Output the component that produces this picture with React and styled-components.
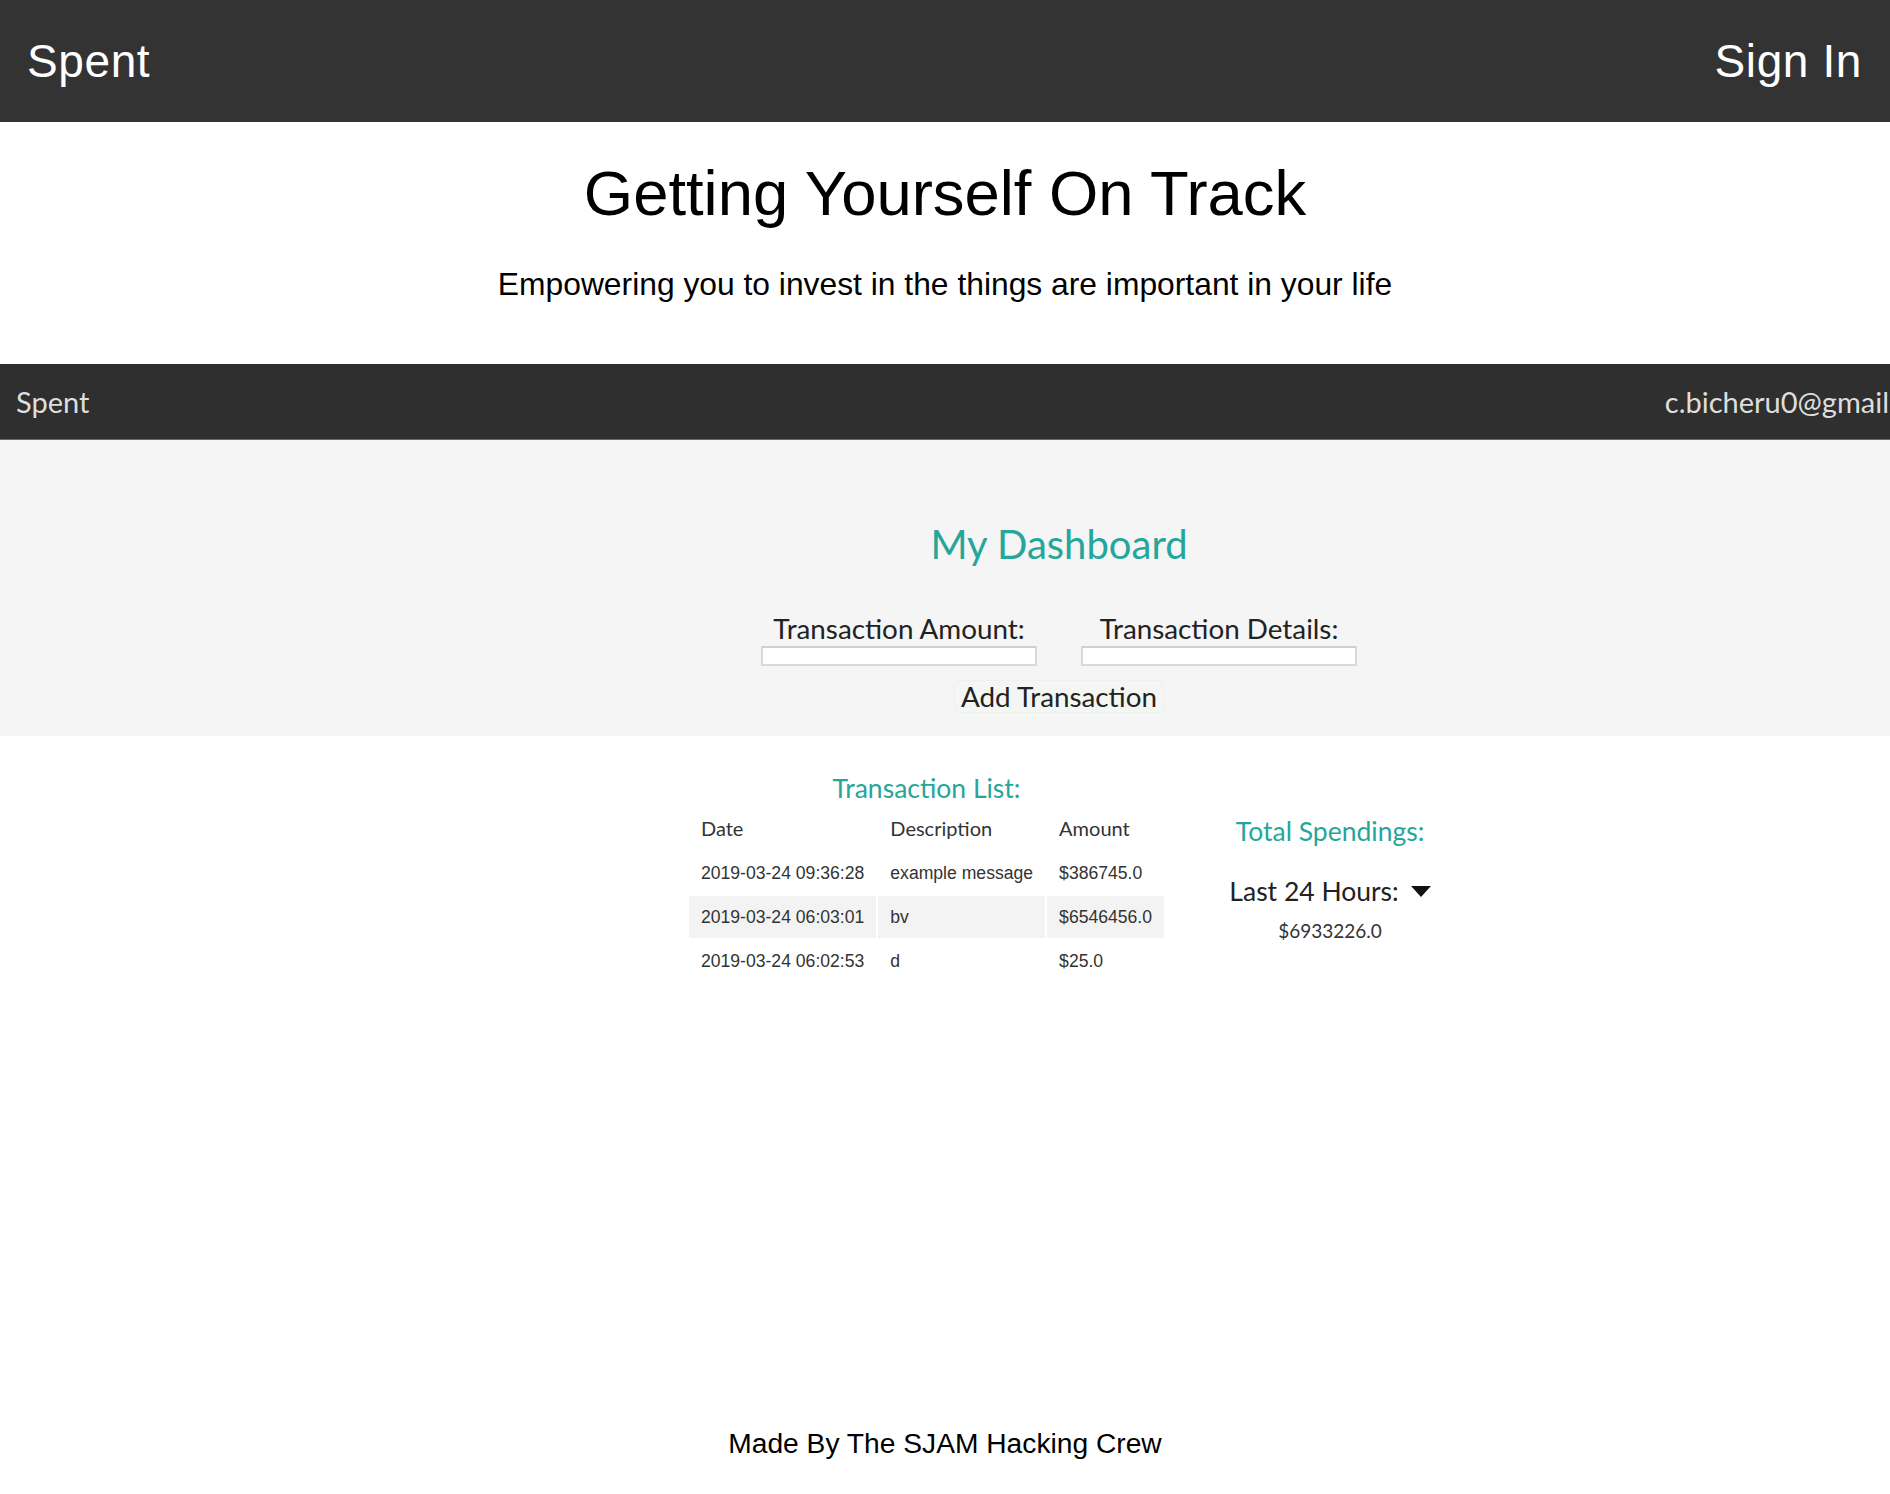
import React from "react";
import styled, { createGlobalStyle } from "styled-components";

const GlobalStyle = createGlobalStyle`
  html, body {
    margin: 0;
    padding: 0;
    background: #fff;
    font-family: "Liberation Sans", Arial, sans-serif;
  }
`;

const Page = styled.div`
  min-height: 1494px;
  display: flex;
  flex-direction: column;
`;

const TopBar = styled.header`
  height: 122px;
  background: #333;
  color: #fff;
  display: flex;
  align-items: center;
  justify-content: space-between;
  padding: 0 28px 0 27px;
  font-size: 46px;
  letter-spacing: 0.6px;
`;

const Hero = styled.section`
  text-align: center;
  padding: 34px 0 61px;
`;

const Title = styled.h1`
  margin: 0;
  font-size: 63.4px;
  line-height: 74px;
  font-weight: normal;
  color: #000;
`;

const Subtitle = styled.p`
  margin: 36px 0 0;
  font-size: 31.8px;
  line-height: 37px;
`;

/* picture of the app, wider than the window and clipped on the right */
const Shot = styled.div`
  overflow: hidden;
  font-family: Lato, "Open Sans", sans-serif;
`;

const ShotInner = styled.div`
  width: 2118px;
`;

const AppNav = styled.nav`
  height: 75px;
  background: #2f2f2f;
  border-bottom: 1px solid #6a6a6a;
  display: flex;
  align-items: center;
  justify-content: space-between;
  padding: 0 16px;
  color: #dedede;
  font-size: 29px;
`;

const NavRight = styled.div`
  display: flex;
  gap: 40px;
  white-space: nowrap;
  margin-right: 10px;
`;

const FormArea = styled.section`
  background: #f5f5f5;
  padding: 80px 0 23px;
  display: flex;
  flex-direction: column;
  align-items: center;
`;

const Teal = styled.h2`
  margin: 0;
  color: #26a69a;
  font-weight: normal;
  font-size: ${(p) => p.size || 26.5}px;
  line-height: ${(p) => (p.size ? p.size + 8 : 32)}px;
  text-align: center;
`;

const FieldRow = styled.div`
  display: flex;
  gap: 44px;
  margin-top: 45px;
`;

const Field = styled.label`
  display: flex;
  flex-direction: column;
  align-items: center;
  font-size: 27.8px;
  line-height: 32px;
  color: #222;
`;

const Input = styled.input`
  box-sizing: border-box;
  width: 276px;
  height: 20px;
  margin-top: 1px;
  background: #fff;
  border: 2px solid #d8d8d8;
  border-top-color: #cfcfcf;
`;

const AddButton = styled.button`
  margin-top: 14px;
  height: 33px;
  padding: 0 6px;
  font-family: Lato, sans-serif;
  font-size: 27.8px;
  line-height: 31px;
  color: #222;
  background: #f3f6f3;
  border: 1px solid #ebf3eb;
  border-radius: 5px;
`;

const Lower = styled.section`
  display: flex;
  justify-content: center;
  gap: 63px;
  padding-top: 36px;
`;

const ListColumn = styled.div`
  display: flex;
  flex-direction: column;
  align-items: center;
`;

const Table = styled.table`
  border-spacing: 2px;
  margin-top: -1px;
`;

const Th = styled.th`
  text-align: left;
  font-weight: normal;
  font-size: 20px;
  color: #333;
  height: 45px;
  padding: 0 12px;
`;

const Td = styled.td`
  font-family: "Liberation Sans", Arial, sans-serif;
  font-size: 17.6px;
  color: #333;
  height: 42px;
  padding: 0 12px;
  white-space: nowrap;
  background: ${(p) => (p.shaded ? "#f3f3f3" : "transparent")};
`;

const TotalColumn = styled.div`
  width: 202px;
  margin-top: 43px;
  display: flex;
  flex-direction: column;
  align-items: center;
`;

const Period = styled.div`
  display: flex;
  align-items: center;
  gap: 12px;
  margin-top: 28px;
  font-size: 26.5px;
  line-height: 32px;
  color: #222;
  white-space: nowrap;
`;

const Amount = styled.div`
  margin-top: 12px;
  font-size: 19px;
  line-height: 24px;
  color: #333;
`;

const Spacer = styled.div`
  flex: 1;
`;

const Footer = styled.footer`
  text-align: center;
  font-size: 28.2px;
  line-height: 32px;
  padding-bottom: 35px;
`;

const rows = [
  ["2019-03-24 09:36:28", "example message", "$386745.0"],
  ["2019-03-24 06:03:01", "bv", "$6546456.0"],
  ["2019-03-24 06:02:53", "d", "$25.0"],
];

export default function App() {
  return (
    <Page>
      <GlobalStyle />
      <TopBar>
        <span>Spent</span>
        <span>Sign In</span>
      </TopBar>
      <Hero>
        <Title>Getting Yourself On Track</Title>
        <Subtitle>Empowering you to invest in the things are important in your life</Subtitle>
      </Hero>
      <Shot>
        <ShotInner>
          <AppNav>
            <span>Spent</span>
            <NavRight>
              <span>c.bicheru0@gmail.com</span>
              <span>Log Out</span>
            </NavRight>
          </AppNav>
          <FormArea>
            <Teal size={40}>My Dashboard</Teal>
            <FieldRow>
              <Field>
                Transaction Amount:
                <Input type="text" />
              </Field>
              <Field>
                Transaction Details:
                <Input type="text" />
              </Field>
            </FieldRow>
            <AddButton>Add Transaction</AddButton>
          </FormArea>
          <Lower>
            <ListColumn>
              <Teal>Transaction List:</Teal>
              <Table>
                <thead>
                  <tr>
                    <Th>Date</Th>
                    <Th>Description</Th>
                    <Th>Amount</Th>
                  </tr>
                </thead>
                <tbody>
                  {rows.map((r, i) => (
                    <tr key={r[0]}>
                      {r.map((c) => (
                        <Td key={c} shaded={i === 1}>{c}</Td>
                      ))}
                    </tr>
                  ))}
                </tbody>
              </Table>
            </ListColumn>
            <TotalColumn>
              <Teal>Total Spendings:</Teal>
              <Period>
                Last 24 Hours:
                <svg width="20" height="11" viewBox="0 0 20 11">
                  <polygon points="0,0 20,0 10,11" fill="#111" />
                </svg>
              </Period>
              <Amount>$6933226.0</Amount>
            </TotalColumn>
          </Lower>
        </ShotInner>
      </Shot>
      <Spacer />
      <Footer>Made By The SJAM Hacking Crew</Footer>
    </Page>
  );
}
